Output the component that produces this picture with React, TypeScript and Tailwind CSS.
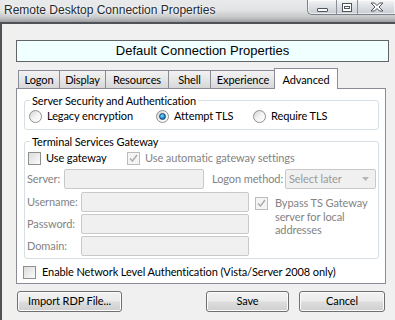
import type { ReactNode } from 'react';

const tabs = [
  { label: 'Logon', w: 'w-[42px]' },
  { label: 'Display', w: 'w-[47px]' },
  { label: 'Resources', w: 'w-[64px]' },
  { label: 'Shell', w: 'w-[43px]' },
  { label: 'Experience', w: 'w-[66px]' },
];

function Radio({ checked }: { checked?: boolean }) {
  return (
    <span className="relative flex h-[13px] w-[13px] shrink-0 items-center justify-center rounded-full border border-[#8e8f8f] bg-gradient-to-br from-[#d2d2d2] via-[#f4f4f4] to-white">
      {checked && (
        <span className="h-[7px] w-[7px] rounded-full border border-[#1a3f6e] bg-[radial-gradient(circle_at_40%_35%,#8fe2ff_0%,#1b8fd1_55%,#0b4f86_100%)]" />
      )}
    </span>
  );
}

function Check({ checked, disabled }: { checked?: boolean; disabled?: boolean }) {
  return (
    <span
      className={`flex h-[13px] w-[13px] shrink-0 items-center justify-center border ${
        disabled ? 'border-[#bcbcbc] bg-[#f4f4f4]' : 'border-[#8e8f8f] bg-gradient-to-br from-[#dcdcdc] to-[#fbfbfb]'
      }`}
    >
      {checked && (
        <svg width="9" height="9" viewBox="0 0 9 9">
          <path d="M1 4.5 L3.5 7 L8 1" fill="none" stroke={disabled ? '#a8a8a8' : '#222'} strokeWidth="1.4" />
        </svg>
      )}
    </span>
  );
}

function Group({ title, children, className }: { title: string; children: ReactNode; className?: string }) {
  return (
    <fieldset className={`rounded-[3px] border border-[#d5dfe5] ${className ?? ''}`}>
      <legend className="ml-[5px] px-[2px] leading-[15px] text-black">{title}</legend>
      {children}
    </fieldset>
  );
}

function Field({ w }: { w: string }) {
  return <div className={`h-[20px] rounded-[2px] border border-[#c9c9c9] bg-[#f0f0f0] ${w}`} />;
}

function Btn({ children, w }: { children: ReactNode; w: string }) {
  return (
    <button
      type="button"
      className={`h-[21px] rounded-[3px] border border-[#707070] bg-[linear-gradient(#f2f2f2_0%,#ebebeb_48%,#dddddd_52%,#cfcfcf_100%)] text-black shadow-[inset_0_0_0_1px_#fbfbfb] ${w}`}
    >
      {children}
    </button>
  );
}

function CaptionButtons() {
  return (
    <div className="ml-auto flex h-[15px] self-start overflow-hidden rounded-bl-[5px] border-b border-l border-[#7c8088] bg-[linear-gradient(#f4f5f6,#dcdfe3_50%,#c9ccd1)] shadow-[inset_0_0_0_1px_rgba(255,255,255,0.6)]">
      <div className="flex w-[29px] items-center justify-center border-r border-[#8d9197]">
        <span className="mt-[5px] h-[4px] w-[11px] rounded-[1px] border border-[#50555c] bg-white" />
      </div>
      <div className="flex w-[21px] items-center justify-center border-r border-[#8d9197]">
        <span className="flex h-[9px] w-[10px] items-center justify-center border border-[#50555c] bg-white">
          <span className="h-[3px] w-[6px] border border-[#50555c]" />
        </span>
      </div>
      <div className="flex w-[37px] items-center justify-center">
        <svg width="14" height="10" viewBox="0 0 14 10">
          <path
            d="M1 1 H4.5 L7 3.5 L9.5 1 H13 L9 5 L13 9 H9.5 L7 6.5 L4.5 9 H1 L5 5 Z"
            fill="#fff"
            stroke="#50555c"
            strokeWidth="1"
            strokeLinejoin="round"
          />
        </svg>
      </div>
    </div>
  );
}

export default function App() {
  return (
    <div className="h-[320px] w-[395px] overflow-hidden bg-[#f0f0f0] [font-family:Lato,'Liberation_Sans',sans-serif] text-[11px] tracking-[-0.1px] text-black">
      {/* title bar */}
      <div className="flex h-[22px] bg-[linear-gradient(#e9eaeb_0%,#e2e3e4_45%,#c3c5c7_80%,#9a9c9f_100%)]">
        <span className="pl-[4px] pt-[3px] [font-family:'Liberation_Sans',Arial,sans-serif] text-[12px] leading-[15px] tracking-normal text-[#262a30] [text-shadow:0_0_6px_#fff,0_0_3px_#fff]">
          Remote Desktop Connection Properties
        </span>
        <CaptionButtons />
      </div>

      {/* client area */}
      <div className="h-[298px] border-l-2 border-t-2 border-[#4e5155] bg-[#f0f0f0]">
        <div className="ml-[14px] mt-[16px] flex h-[22px] w-[373px] items-center justify-center border border-[#646464] bg-[#f0ffff] [font-family:'Liberation_Sans',Arial,sans-serif] text-[13px] tracking-normal">
          Default Connection Properties
        </div>

        {/* tabs */}
        <div className="ml-[16px] mt-[6px] flex h-[20px] items-end">
          {tabs.map((t, i) => (
            <div
              key={t.label}
              className={`flex h-[18px] items-center justify-center border border-b-0 border-[#898c95] bg-[linear-gradient(#f2f2f2,#e6e6e6_50%,#d7d7d7)] pt-[1px] ${t.w} ${
                i > 0 ? '-ml-px' : ''
              }`}
            >
              {t.label}
            </div>
          ))}
          <div className="relative z-10 -mb-px -ml-[2px] flex h-[21px] w-[64px] items-start justify-center border border-b-0 border-[#898c95] bg-white pt-[3px]">
            Advanced
          </div>
        </div>

        {/* panel */}
        <div className="ml-[14px] h-[196px] w-[370px] border border-[#898c95] bg-white">
          <Group title="Server Security and Authentication" className="ml-[7px] mt-[4px] h-[37px] w-[355px]">
            <div className="mt-[1px] flex h-[15px] items-center">
              <label className="flex w-[131px] items-center gap-[5px] pl-[4px]">
                <Radio />
                Legacy encryption
              </label>
              <label className="flex w-[97px] items-center gap-[5px]">
                <Radio checked />
                Attempt TLS
              </label>
              <label className="flex items-center gap-[5px]">
                <Radio />
                Require TLS
              </label>
            </div>
          </Group>

          <Group title="Terminal Services Gateway" className="ml-[7px] mt-[4px] h-[125px] w-[355px]">
            <div className="mt-[2px] flex h-[15px] items-center pl-[3px]">
              <label className="flex w-[99px] items-center gap-[5px]">
                <Check />
                Use gateway
              </label>
              <label className="flex items-center gap-[5px] text-[#838383]">
                <Check checked disabled />
                Use automatic gateway settings
              </label>
            </div>

            <div className="mt-[3px] flex h-[20px] items-center whitespace-nowrap pl-[2px] text-[#838383]">
              <span className="w-[37px]">Server:</span>
              <Field w="w-[140px]" />
              <span className="ml-[8px] w-[73px]">Logon method:</span>
              <div className="flex h-[20px] w-[91px] items-center justify-between rounded-[2px] border border-[#c9c9c9] bg-[#f0f0f0] pl-[3px] pr-[6px] text-[#9a9a9a]">
                Select later
                <svg width="7" height="4" viewBox="0 0 7 4">
                  <path d="M0 0 H7 L3.5 4 Z" fill="#b5b5b5" />
                </svg>
              </div>
            </div>

            <div className="mt-[3px] flex">
              <div className="flex flex-col gap-[2px] pl-[2px] text-[#838383]">
                {['Username:', 'Password:', 'Domain:'].map((l) => (
                  <div key={l} className="flex h-[20px] items-center">
                    <span className="w-[54px]">{l}</span>
                    <Field w="w-[168px]" />
                  </div>
                ))}
              </div>
              <div className="ml-[6px] mt-[4px] flex items-start gap-[7px] text-[#838383]">
                <span className="mt-[1px]">
                  <Check checked disabled />
                </span>
                <span className="w-[100px] leading-[13.5px]">Bypass TS Gateway server for local addresses</span>
              </div>
            </div>
          </Group>

          <label className="ml-[6px] mt-[6px] flex h-[14px] items-center gap-[6px]">
            <Check />
            Enable Network Level Authentication (Vista/Server 2008 only)
          </label>
        </div>

        {/* bottom buttons */}
        <div className="ml-[15px] mt-[7px] flex w-[368px]">
          <Btn w="w-[105px]">Import RDP File...</Btn>
          <div className="ml-auto flex gap-[10px]">
            <Btn w="w-[83px]">Save</Btn>
            <Btn w="w-[86px]">Cancel</Btn>
          </div>
        </div>
      </div>
    </div>
  );
}
